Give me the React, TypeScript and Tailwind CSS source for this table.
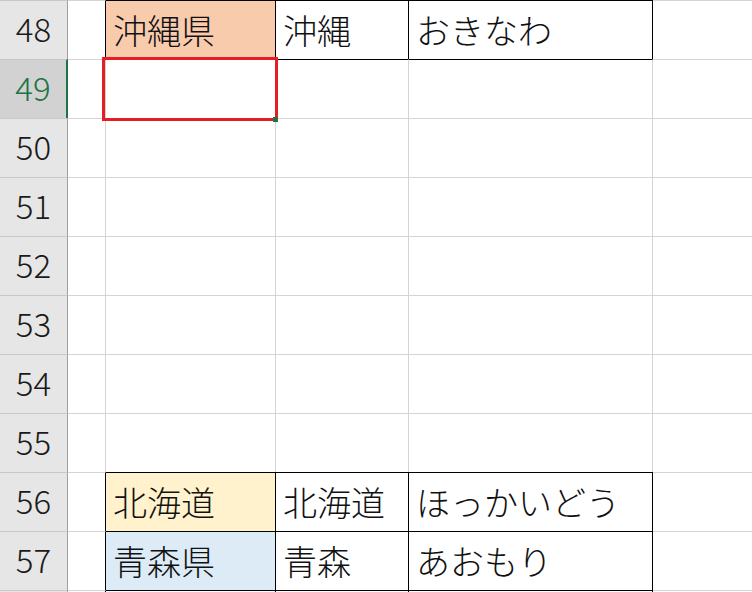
import React from "react";

type Row = {
  n: number;
  b?: string;
  bBg?: string;
  c?: string;
  d?: string;
  bordered?: boolean;
  hidden?: boolean;
};

const rows: Row[] = [
  { n: 48, b: "沖縄県", bBg: "bg-[#f8cbad]", c: "沖縄", d: "おきなわ", bordered: true },
  { n: 49 },
  { n: 50 },
  { n: 51 },
  { n: 52 },
  { n: 53 },
  { n: 54 },
  { n: 55 },
  { n: 56, b: "北海道", bBg: "bg-[#fff2cc]", c: "北海道", d: "ほっかいどう", bordered: true },
  { n: 57, b: "青森県", bBg: "bg-[#ddebf7]", c: "青森", d: "あおもり", bordered: true },
  { n: 58, bordered: true, hidden: true },
];

const font = "font-['Noto_Sans_CJK_JP','Noto_Sans',sans-serif]";

export default function App() {
  return (
    <div className={`relative w-[752px] h-[592px] overflow-hidden bg-white ${font} font-light`}>
      <div className="flex flex-col">
        {rows.map((r, i) => {
          const prev = i > 0 ? rows[i - 1] : undefined;
          const topBlack = !!r.bordered || !!prev?.bordered;
          const selected = r.n === 49;
          const tb = topBlack ? "border-t-black" : "border-t-[#d4d4d4]";
          const rb = r.bordered ? "border-r-black" : "border-r-[#d4d4d4]";
          return (
            <div key={r.n} className="flex h-[59px] shrink-0">
              <div
                className={`w-[68px] shrink-0 flex items-center justify-center border-t border-t-[#c8c8c8] ${
                  selected
                    ? "bg-[#d2d2d2] border-r-2 border-r-[#217346] text-[#217346]"
                    : "bg-[#e6e6e6] border-r border-r-[#9e9e9e] text-[#1a1a1a]"
                } text-[33px] leading-none`}
              >
                {!r.hidden && <span className="pb-[4px]">{r.n}</span>}
              </div>
              <div className={`w-[38px] shrink-0 border-t border-t-[#d4d4d4] border-r ${rb}`} />
              <div
                className={`w-[170px] shrink-0 flex items-center pl-[7px] border-t ${tb} border-r ${rb} ${
                  r.bBg ?? "bg-white"
                } text-[34px] leading-none text-[#111]`}
              >
                {r.b}
              </div>
              <div
                className={`w-[133px] shrink-0 flex items-center pl-[7px] border-t ${tb} border-r ${rb} text-[34px] leading-none text-[#111]`}
              >
                {r.c}
              </div>
              <div
                className={`w-[244px] shrink-0 flex items-center pl-[7px] border-t ${tb} border-r ${rb} text-[34px] leading-none text-[#111] whitespace-nowrap`}
              >
                {r.d}
              </div>
              <div className="flex-1 border-t border-t-[#d4d4d4]" />
            </div>
          );
        })}
      </div>
      <div className="absolute left-[102px] top-[57px] w-[176px] h-[64px] border-[3px] border-[#e81c24]" />
      <div className="absolute left-[273px] top-[117px] w-[5px] h-[5px] bg-[#217346]" />
    </div>
  );
}
